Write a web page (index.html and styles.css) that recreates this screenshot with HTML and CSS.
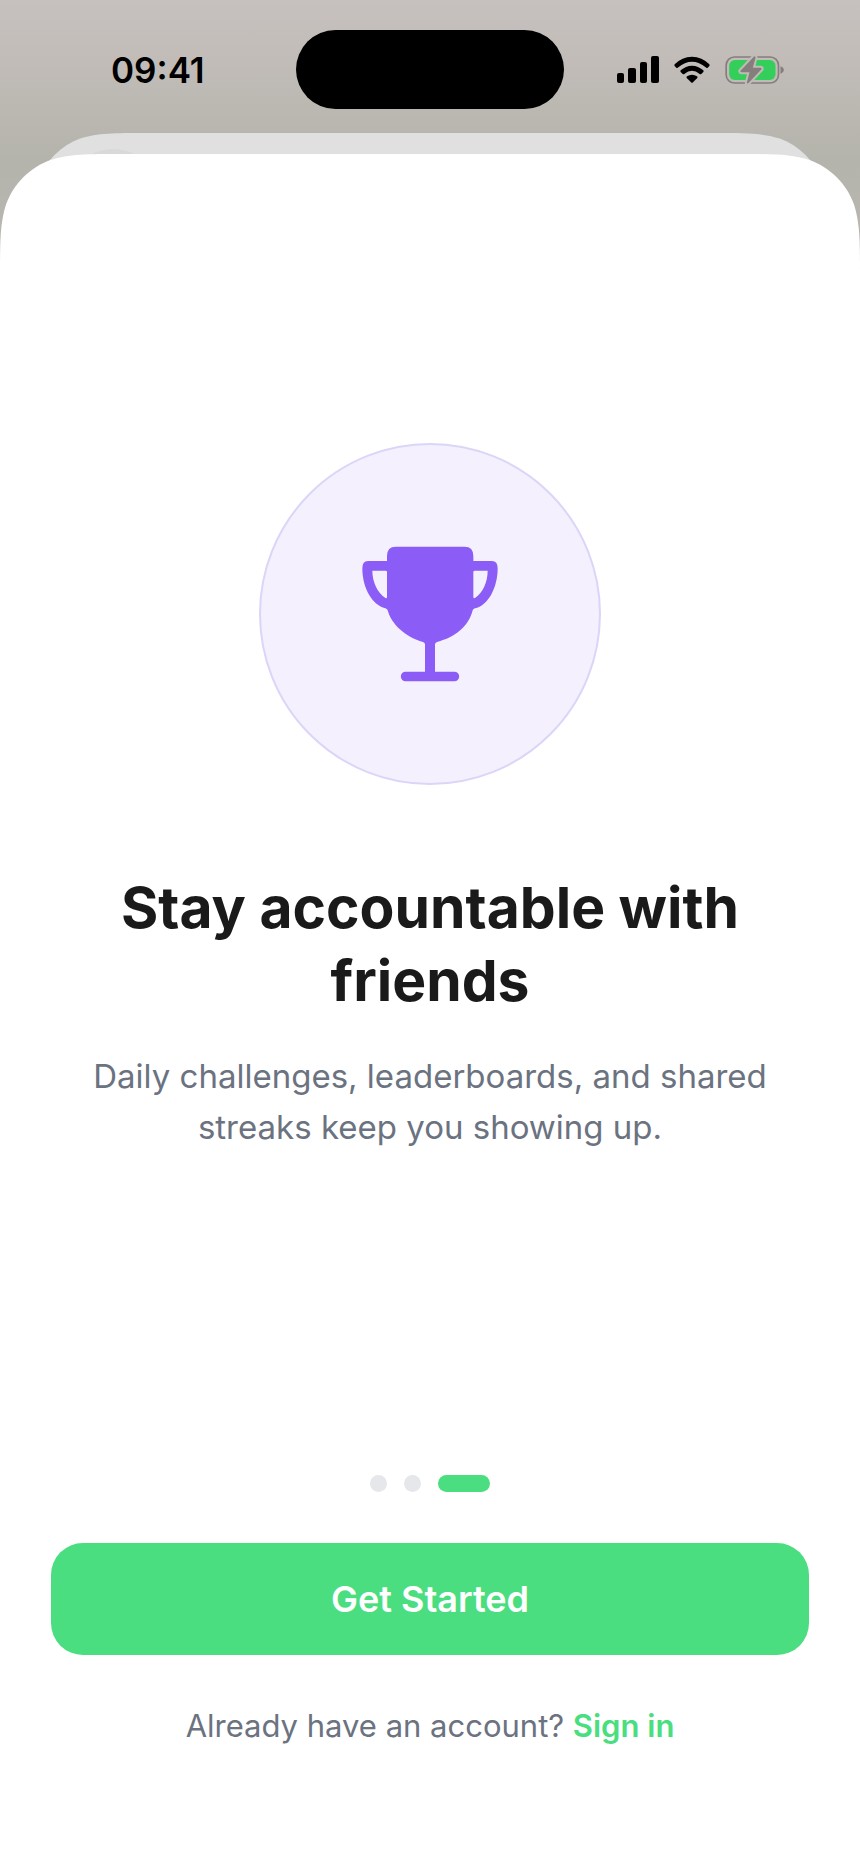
FILE: index.html
```html
<!DOCTYPE html>
<html lang="en">
<head>
<meta charset="utf-8">
<meta name="viewport" content="width=device-width, initial-scale=1">
<title>Stay accountable with friends</title>
<link rel="stylesheet" href="styles.css">
</head>
<body>
<div class="screen">
  <header class="status-bar">
    <time class="clock">09:41</time>
    <div class="island"></div>
    <div class="indicators">
      <svg class="signal" viewBox="0 0 42 27" width="42" height="27" aria-label="Signal" role="img">
        <rect x="0" y="17" width="7" height="10" rx="2"/>
        <rect x="11" y="12" width="8" height="15" rx="2"/>
        <rect x="23" y="6" width="7" height="21" rx="2"/>
        <rect x="34" y="0" width="8" height="27" rx="2"/>
      </svg>
      <svg class="wifi" viewBox="0 0 108 81" width="36" height="27" aria-label="Wi-Fi" role="img">
        <path d="M2 25Q24 2 54 2Q84 2 106 25Q108 28 106 30L101 35Q98 37 95 34Q76 17 54 17Q32 17 13 34Q10 37 7 35L2 30Q0 28 2 25Z"/>
        <path d="M20 43Q35 29 54 29Q73 29 88 43Q90 46 88 48L82 54Q79 56 76 53Q66 44 54 44Q42 44 32 53Q29 56 26 54L20 48Q18 46 20 43Z"/>
        <path d="M39 61Q46 56 54 56Q62 56 69 61Q72 64 69 67L57 79Q54 82 51 79L39 67Q36 64 39 61Z"/>
      </svg>
      <svg class="battery" viewBox="0 0 176 90" width="59" height="30" aria-label="Battery charging" role="img">
        <rect class="battery-case" x="3" y="6" width="157" height="78" rx="25"/>
        <path class="battery-tip" d="M166 34Q176 38 176 45Q176 52 166 56Z"/>
        <rect class="battery-level" x="12" y="15" width="139" height="60" rx="17"/>
        <path class="bolt-gap" d="M86 5L46 47Q44 51 49 52L73 52L65 83Q65 87 70 84L109 43Q111 38 106 38L83 38L91 8Q91 2 86 5Z"/>
        <path class="bolt" d="M86 5L46 47Q44 51 49 52L73 52L65 83Q65 87 70 84L109 43Q111 38 106 38L83 38L91 8Q91 2 86 5Z"/>
      </svg>
    </div>
  </header>

  <div class="sheet-edge sheet-edge-back">
    <svg class="corner" viewBox="0 0 122 122" aria-hidden="true"><path d="M0 122.3C0 87 0 69.5 6 50.5C13.5 29.8 29.8 13.5 50.5 6C69.5 0 87 0 122.3 0V122.3Z"/><circle class="ghost" cx="86" cy="67" r="50"/></svg>
    <div class="edge-fill"></div>
    <svg class="corner corner-right" viewBox="0 0 122 122" aria-hidden="true"><path d="M0 122.3C0 87 0 69.5 6 50.5C13.5 29.8 29.8 13.5 50.5 6C69.5 0 87 0 122.3 0V122.3Z"/></svg>
  </div>

  <main class="sheet">
    <div class="sheet-edge">
      <svg class="corner" viewBox="0 0 122 122" aria-hidden="true"><path d="M0 122.3C0 87 0 69.5 6 50.5C13.5 29.8 29.8 13.5 50.5 6C69.5 0 87 0 122.3 0V122.3Z"/></svg>
      <div class="edge-fill"></div>
      <svg class="corner corner-right" viewBox="0 0 122 122" aria-hidden="true"><path d="M0 122.3C0 87 0 69.5 6 50.5C13.5 29.8 29.8 13.5 50.5 6C69.5 0 87 0 122.3 0V122.3Z"/></svg>
    </div>
    <div class="sheet-body">
      <section class="hero">
        <div class="badge">
          <svg class="trophy" viewBox="0 11 540 540" aria-hidden="true">
            <path fill-rule="evenodd" d="M167 79H374Q400 79 400 107V122H456Q473 122 473 144C473 204 443 257 405 264Q400 265 398 270C386 318 346 351 291 365Q285 367 285 372V454H343A14 14 0 0 1 343 483H197A14 14 0 0 1 197 454H255V372Q255 367 249 365C197 351 154 312 143 270Q141 265 136 264C97 254 67 204 67 144Q67 122 84 122H141V107Q141 79 167 79ZM97 151C97 184 112 217 136 233Q141 235 141 229V155Q141 151 137 151ZM443 151H404Q400 151 400 155V229Q400 235 405 233C429 217 443 184 443 151Z"/>
          </svg>
        </div>
        <h1 class="title">Stay accountable with friends</h1>
        <p class="lead">Daily challenges, leaderboards, and shared streaks keep you showing up.</p>
      </section>
      <div class="pager" role="img" aria-label="Page 3 of 3">
        <span class="dot"></span><span class="dot"></span><span class="dot dot-active"></span>
      </div>
      <button class="cta" type="button">Get Started</button>
      <p class="signin">Already have an account? <a class="signin-link" href="#">Sign in</a></p>
    </div>
  </main>
</div>
</body>
</html>
```
FILE: styles.css
```css
* {
  box-sizing: border-box;
}

body {
  margin: 0;
  font-family: Inter, "Liberation Sans", sans-serif;
  background: #ffffff;
}

.screen {
  display: flex;
  flex-direction: column;
  min-height: 100vh;
  background: linear-gradient(#c6c1be 0, #c3bdba 50px, #b9b7b0 120px, #b5b4ac 160px, #b9b7b1 280px);
}

.status-bar {
  display: grid;
  grid-template-columns: 1fr 268px 1fr;
  align-items: center;
  padding: 30px 0 24px;
}

.clock {
  padding-left: 111px;
  font-size: 35px;
  line-height: 44px;
  font-weight: 600;
  color: #000000;
}

.island {
  height: 79px;
  border-radius: 40px;
  background: #000000;
}

.indicators {
  display: flex;
  align-items: center;
  gap: 15px;
  padding-left: 53px;
}

.battery-case {
  fill: none;
  stroke: #857e7d;
  stroke-width: 5;
}

.battery-tip,
.bolt {
  fill: #857e7d;
}

.battery-level {
  fill: #34ce5b;
}

.bolt-gap {
  fill: #c0bbb7;
  stroke: #c0bbb7;
  stroke-width: 12;
}

.sheet-edge {
  display: flex;
}

.corner {
  flex: none;
  width: 122px;
  height: 122px;
  fill: #ffffff;
}

.corner-right {
  transform: scaleX(-1);
}

.edge-fill {
  flex: 1;
  background: #ffffff;
}

.sheet-edge-back {
  margin: 0 33px;
}

.sheet-edge-back .corner {
  width: 114px;
  height: 114px;
  fill: #e0e0e0;
}

.sheet-edge-back .ghost {
  fill: #d9d9d9;
}

.sheet-edge-back .edge-fill {
  background: #e0e0e0;
}

.sheet {
  position: relative;
  display: flex;
  flex: 1;
  flex-direction: column;
  margin-top: -93px;
}

.sheet-body {
  display: flex;
  flex: 1;
  flex-direction: column;
  padding: 0 51px 121px;
  background: #ffffff;
}

.hero {
  display: flex;
  flex: 1;
  flex-direction: column;
  align-items: center;
  justify-content: center;
  padding-bottom: 156px;
  text-align: center;
}

.badge {
  display: grid;
  place-items: center;
  width: 342px;
  height: 342px;
  margin-bottom: 86px;
  border: 2px solid #dbd5f8;
  border-radius: 50%;
  background: #f4f0fe;
}

.trophy {
  width: 180px;
  height: 180px;
  fill: #8b5cf6;
}

.title {
  max-width: 690px;
  margin: 0 0 34px;
  font-size: 57px;
  line-height: 73px;
  font-weight: 700;
  color: #1a1a1a;
}

.lead {
  max-width: 700px;
  margin: 0;
  font-size: 33px;
  line-height: 51px;
  color: #6b7280;
}

.pager {
  display: flex;
  justify-content: center;
  gap: 17px;
  margin-bottom: 51px;
}

.dot {
  width: 17px;
  height: 17px;
  border-radius: 9px;
  background: #e5e7eb;
}

.dot-active {
  width: 52px;
  background: #4ade80;
}

.cta {
  height: 112px;
  border: 0;
  border-radius: 32px;
  background: #4ade80;
  font-family: inherit;
  font-size: 36px;
  font-weight: 600;
  color: #ffffff;
}

.signin {
  margin: 49px 0 0;
  font-size: 31px;
  line-height: 44px;
  text-align: center;
  color: #6b7280;
}

.signin-link {
  font-weight: 600;
  color: #4ade80;
  text-decoration: none;
}
```
